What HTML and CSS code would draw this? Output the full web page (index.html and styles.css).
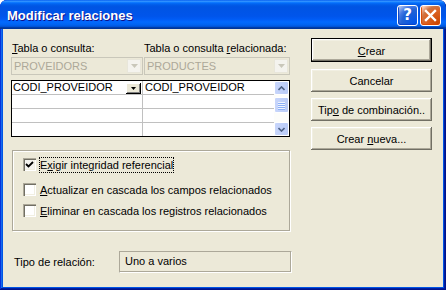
FILE: index.html
```html
<!DOCTYPE html>
<html>
  <head>
    <meta charset="UTF-8">
    <link rel="stylesheet" href="styles.css">
  </head>
  <body>
    <div class="window">
      <div class="titlebar">
        <span class="title">Modificar relaciones</span>
        <div class="controls">
          <span class="ctl help">?</span>
          <span class="ctl close">
            <svg width="13" height="13" viewBox="0 0 13 13"><path d="M2 2 L11 11 M11 2 L2 11" stroke="#fff" stroke-width="2.4" stroke-linecap="square"/></svg>
          </span>
        </div>
      </div>

      <div class="client">
        <div class="main">
          <div class="labels">
            <span class="lbl-left"><u>T</u>abla o consulta:</span>
            <span class="lbl-right">Tabla o consulta <u>r</u>elacionada:</span>
          </div>

          <div class="combos">
            <div class="combo combo-left">
              <span class="combo-text">PROVEIDORS</span>
              <span class="drop"><svg width="7" height="4" viewBox="0 0 7 4"><path d="M0 0 H7 L3.5 4 Z" fill="#c9c7ba"/></svg></span>
            </div>
            <div class="combo combo-right">
              <span class="combo-text">PRODUCTES</span>
              <span class="drop"><svg width="7" height="4" viewBox="0 0 7 4"><path d="M0 0 H7 L3.5 4 Z" fill="#c9c7ba"/></svg></span>
            </div>
          </div>

          <div class="grid">
            <div class="col col-left">
              <div class="cell cell-edit">
                <span>CODI_PROVEIDOR</span>
                <span class="cell-drop"><svg width="5" height="3" viewBox="0 0 5 3"><path d="M0 0 H5 L2.5 3 Z" fill="#000"/></svg></span>
              </div>
              <div class="cell"></div>
              <div class="cell"></div>
              <div class="cell last"></div>
            </div>
            <div class="col col-right">
              <div class="cell">CODI_PROVEIDOR</div>
              <div class="cell"></div>
              <div class="cell"></div>
              <div class="cell last"></div>
            </div>
            <div class="scrollbar">
              <span class="sb-btn"><svg width="7" height="5" viewBox="0 0 7 5"><path d="M0.5 4 L3.5 1 L6.5 4" fill="none" stroke="#4d6185" stroke-width="1.6"/></svg></span>
              <span class="sb-thumb">
                <i></i><i></i><i></i><i></i>
              </span>
              <span class="sb-track"></span>
              <span class="sb-btn"><svg width="7" height="5" viewBox="0 0 7 5"><path d="M0.5 1 L3.5 4 L6.5 1" fill="none" stroke="#4d6185" stroke-width="1.6"/></svg></span>
            </div>
          </div>

          <div class="group">
            <div class="check-row row-1">
              <span class="box"><svg width="9" height="9" viewBox="0 0 9 9"><path d="M1 4 L3.5 6.5 L8 2" fill="none" stroke="#000" stroke-width="1.8"/></svg></span>
              <span class="focus">E<u>x</u>igir integridad referencial</span>
            </div>
            <div class="check-row row-2">
              <span class="box"></span>
              <span><u>A</u>ctualizar en cascada los campos relacionados</span>
            </div>
            <div class="check-row row-3">
              <span class="box"></span>
              <span><u>E</u>liminar en cascada los registros relacionados</span>
            </div>
          </div>

          <div class="reltype">
            <span class="reltype-label">Tipo de relación:</span>
            <span class="reltype-box">Uno a varios</span>
          </div>
        </div>

        <div class="side">
          <span class="button default"><span><u>C</u>rear</span></span>
          <span class="button"><span>Cancelar</span></span>
          <span class="button"><span>Tip<u>o</u> de combinación..</span></span>
          <span class="button"><span>Crear <u>n</u>ueva...</span></span>
        </div>
      </div>
    </div>
  </body>
</html>
```

FILE: styles.css
```css
body {
  margin: 0;
  background: #fff;
  font-family: "Liberation Sans", Arial, sans-serif;
  font-size: 11px;
  color: #000;
}

.window {
  width: 446px;
  height: 290px;
  display: flex;
  flex-direction: column;
  border-radius: 7px 7px 0 0;
  background: #0055e5;
  box-shadow: inset -1px -1px #00138c, inset 1px 0 #0831d9, inset -2px -2px #001ea0, inset 2px 0 #166aee;
  overflow: hidden;
}

/* title bar */
.titlebar {
  height: 29px;
  display: flex;
  align-items: center;
  justify-content: space-between;
  padding: 0 5px 0 7px;
  box-sizing: border-box;
  background: linear-gradient(to bottom, #0058ee 0%, #3593ff 4%, #288eff 6%, #127dff 8%, #036ffc 10%, #0262ee 14%, #0057e5 20%, #0054e3 24%, #0055eb 56%, #005bf5 66%, #026afe 76%, #0062ef 86%, #0052d6 92%, #0040ab 94%, #003092 100%);
  border-radius: 7px 7px 0 0;
}

.title {
  color: #fff;
  font-weight: bold;
  font-size: 13px;
  text-shadow: 1px 1px #0f1089;
  padding-top: 1px;
}

.controls {
  display: flex;
  gap: 2px;
  padding-top: 1px;
}

.ctl {
  width: 19px;
  height: 19px;
  border: 1px solid #fff;
  border-radius: 3px;
  display: flex;
  align-items: center;
  justify-content: center;
  color: #fff;
}

.help {
  background: radial-gradient(circle at 90% 90%, #0054e9 0%, #2263d5 55%, #4479e4 70%, #a3bbec 90%, #fff 100%);
  font-family: "DejaVu Sans", sans-serif;
  font-weight: bold;
  font-size: 15px;
  box-shadow: inset 1px -1px 1px #0a42c6;
}

.close {
  background: radial-gradient(circle at 90% 90%, #cc4600 0%, #dc6527 55%, #cd7546 70%, #ffccb2 90%, #fff 100%);
  box-shadow: inset 1px -1px 1px #da4600;
}

/* client area */
.client {
  flex: 1;
  margin: 0 3px 3px 3px;
  background: #ece9d8;
  display: flex;
  padding: 0 11px 0 8px;
  gap: 19px;
}

.main {
  width: 281px;
  padding-top: 13px;
}

.labels {
  display: flex;
  height: 13px;
  line-height: 13px;
}

.lbl-left {
  width: 132px;
  padding-left: 1px;
}

.combos {
  display: flex;
  gap: 1px;
  margin-top: 2px;
}

.combo {
  height: 18px;
  box-sizing: border-box;
  border: 1px solid #c9c7ba;
  display: flex;
  align-items: center;
  justify-content: space-between;
  padding: 0 1px 0 2px;
  color: #aca899;
}

.combo-left {
  width: 132px;
}

.combo-right {
  width: 146px;
}

.drop {
  width: 14px;
  height: 14px;
  box-sizing: border-box;
  border: 1px solid #e8e6da;
  background: #f4f3ee;
  display: flex;
  align-items: center;
  justify-content: center;
}

/* datasheet grid */
.grid {
  margin-top: 5px;
  width: 279px;
  height: 57px;
  box-sizing: border-box;
  border: 1px solid #000;
  background: #fff;
  display: flex;
}

.col {
  width: 131px;
}

.col-left {
  border-right: 1px solid #c0c0c0;
  width: 130px;
}

.cell {
  height: 13px;
  line-height: 13px;
  border-bottom: 1px solid #c0c0c0;
  padding-left: 1px;
}

.col-right .cell {
  padding-left: 2px;
}

.cell.last {
  border-bottom: 0;
}

.cell-edit {
  display: flex;
  justify-content: space-between;
  align-items: flex-start;
}

.cell-drop {
  width: 15px;
  height: 11px;
  margin: 2px 1px 0 0;
  box-sizing: border-box;
  background: #ece9d8;
  box-shadow: inset -1px -1px #000, inset 1px 1px #fff, inset -2px -2px #808080;
  display: flex;
  align-items: center;
  justify-content: center;
}

.scrollbar {
  width: 15px;
  display: flex;
  flex-direction: column;
  background: #fdfdfa;
}

.sb-btn,
.sb-thumb {
  height: 14px;
  box-sizing: border-box;
  border: 1px solid #fff;
  border-radius: 2px;
  background: linear-gradient(to right, #c8d6fb, #b9cbf7);
  display: flex;
  align-items: center;
  justify-content: center;
}

.sb-thumb {
  height: 16px;
  margin-top: 2px;
  flex-direction: column;
  gap: 1px;
}

.sb-thumb i {
  display: block;
  width: 7px;
  height: 1px;
  background: #eef4fe;
  box-shadow: 0 1px #8cb0f8;
}

.sb-track {
  flex: 1;
}

/* check boxes */
.group {
  margin-top: 13px;
  height: 81px;
  box-sizing: border-box;
  border: 1px solid #aca899;
  box-shadow: inset 1px 1px #fff, 1px 1px #fff;
  margin-left: 1px;
  width: 278px;
  padding: 6px 10px;
}

.check-row {
  display: flex;
  align-items: center;
  height: 15px;
  gap: 4px;
}

.row-2 {
  margin-top: 10px;
}

.row-3 {
  margin-top: 6px;
}

.box {
  width: 13px;
  height: 13px;
  box-sizing: border-box;
  background: #fff;
  box-shadow: inset 1px 1px #aca899, inset 2px 2px #716f64, inset -1px -1px #fff, inset -2px -2px #f1efe2;
  display: flex;
  align-items: center;
  justify-content: center;
}

.row-1 .box {
  background: #f4f3ee;
}

.focus {
  outline: 1px dotted #000;
  padding: 1px 0 1px 0;
}

/* relation type */
.reltype {
  margin-top: 20px;
  display: flex;
  align-items: center;
  height: 22px;
}

.reltype-label {
  width: 105px;
  padding-left: 3px;
}

.reltype-box {
  width: 173px;
  height: 22px;
  line-height: 18px;
  box-sizing: border-box;
  border: 1px solid #aca899;
  border-right-color: #fff;
  border-bottom-color: #fff;
  box-shadow: inset -1px -1px #aca899;
  padding-left: 5px;
}

/* command buttons */
.side {
  width: 121px;
  padding-top: 9px;
  display: flex;
  flex-direction: column;
}

.button {
  height: 23px;
  box-sizing: border-box;
  background: #ece9d8;
  box-shadow: inset -1px -1px #716f64, inset 1px 1px #fff, inset -2px -2px #aca899, inset 2px 2px #f1efe2;
  display: flex;
  align-items: center;
  justify-content: center;
  margin-top: 6px;
}

.button.default {
  height: 24px;
  margin-top: 0;
  margin-bottom: 1px;
  border: 1px solid #000;
}

.button.default span {
  margin-top: 1px;
}
```
